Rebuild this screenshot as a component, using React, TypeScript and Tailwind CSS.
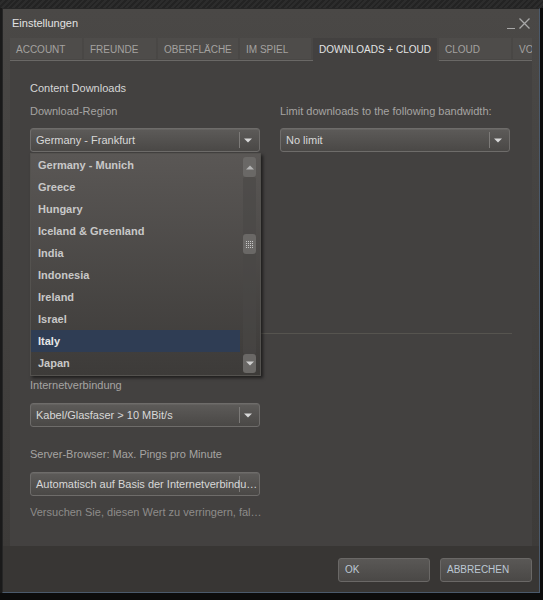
import React from 'react';

const tabs = [
  { label: 'ACCOUNT', w: 'w-[74px]' },
  { label: 'FREUNDE', w: 'w-[74px]' },
  { label: 'OBERFLÄCHE', w: 'w-[82px]' },
  { label: 'IM SPIEL', w: 'w-[73px]' },
  { label: 'DOWNLOADS + CLOUD', w: 'w-[126px]', active: true },
  { label: 'CLOUD', w: 'w-[74px]' },
  { label: 'VOICE', w: 'w-[60px]' },
];

const regions = [
  'Germany - Munich',
  'Greece',
  'Hungary',
  'Iceland & Greenland',
  'India',
  'Indonesia',
  'Ireland',
  'Israel',
  'Italy',
  'Japan',
];

function Arrow({ up = false, color = '#d8d8d8' }: { up?: boolean; color?: string }) {
  return (
    <svg width="8" height="5" viewBox="0 0 8 5" className="block">
      <path d={up ? 'M0 4.5h8L4 0.5z' : 'M0 0.5h8L4 4.5z'} fill={color} />
    </svg>
  );
}

function Select({ text, noArrow = false }: { text: string; noArrow?: boolean }) {
  return (
    <div className="relative h-[24px] w-[230px] rounded-[3px] border border-[#6e6c6a] bg-gradient-to-b from-[#5d5b59] to-[#4a4846] shadow-[inset_0_1px_0_rgba(255,255,255,0.05)]">
      <div className="absolute right-[19px] top-[3px] h-[16px] w-px bg-[#7c7a78]" />
      {!noArrow && (
        <div className="absolute right-[7px] top-[9px]">
          <Arrow />
        </div>
      )}
      <div className="absolute inset-0 truncate pl-[5px] pr-0 text-[11px] leading-[22px] text-[#d8d8d8]">
        {text}
      </div>
    </div>
  );
}

function Grip() {
  return (
    <svg width="7" height="7" viewBox="0 0 7 7" className="block">
      {[0, 2, 4, 6].map((y) =>
        [0, 2, 4, 6].map((x) => <rect key={`${x}-${y}`} x={x} y={y} width="1" height="1" fill="#c8c8c8" />)
      )}
    </svg>
  );
}

function RegionList() {
  return (
    <div className="absolute left-0 top-[25px] z-10 flex h-[223px] w-[231px] border border-[#54524f] bg-gradient-to-b from-[#5a5755] to-[#3d3b39] shadow-[2px_2px_3px_rgba(0,0,0,0.55)]">
      <div className="w-[209px]">
        {regions.map((r) => (
          <div
            key={r}
            className={`h-[22px] pl-[7px] text-[11px] font-bold leading-[22px] ${
              r === 'Italy' ? 'bg-[#2f3d54] text-[#e6e6e6]' : 'text-[#c8c8c8]'
            }`}
          >
            {r}
          </div>
        ))}
      </div>
      <div className="ml-[3px] flex w-[13px] flex-col pt-[3px] pb-[2px]">
        <div className="flex h-[20px] items-center justify-center rounded-[3px] bg-[#6a6866]">
          <Arrow up color="#b4b4b4" />
        </div>
        <div className="flex flex-1 flex-col rounded-[2px] bg-[#4a4846]/60 pt-[57px]">
          <div className="flex h-[20px] items-center justify-center rounded-[3px] bg-[#6a6866]">
            <Grip />
          </div>
        </div>
        <div className="flex h-[19px] items-center justify-center rounded-[3px] bg-[#6a6866]">
          <Arrow color="#d0d0d0" />
        </div>
      </div>
    </div>
  );
}

export default function App() {
  return (
    <div className="h-[600px] w-[543px] overflow-hidden bg-[#0c0c0c] font-['Liberation_Sans',Arial,sans-serif]">
      <div className="h-[8px] bg-[repeating-linear-gradient(135deg,#232323_0px,#232323_2px,#2c2c2c_2px,#2c2c2c_4px)]" />
      <div className="flex">
        <div className="h-[585px] w-[2px] bg-[#1a1a1a]" />
        <div className="flex h-[585px] w-[538px] flex-col border border-[#262626] border-r-[#4b5a6c] border-b-[#4b5a6c] bg-gradient-to-b from-[#4a4846] to-[#3c3a38]">
          {/* title bar */}
          <div className="flex h-[29px] items-center justify-between pl-[9px] pr-[9px]">
            <span className="text-[11px] text-[#e2e2e2]">Einstellungen</span>
            <div className="flex items-center gap-[4px]">
              <div className="mt-[9px] h-px w-[8px] bg-[#a8a8a8]" />
              <svg width="11" height="11" viewBox="0 0 11 11">
                <path d="M0.5 0.5L10.5 10.5M10.5 0.5L0.5 10.5" stroke="#a8a8a8" strokeWidth="1.3" />
              </svg>
            </div>
          </div>

          {/* tabs */}
          <div className="mx-[7px] flex h-[23px] overflow-hidden">
            {tabs.map((t) => (
              <div
                key={t.label}
                className={`${t.w} shrink-0 pr-[2px] ${t.active ? '' : 'border-b border-[#6a6866]'}`}
              >
                <div
                  className={`overflow-hidden whitespace-nowrap pl-[6px] pt-[1px] text-[10px] leading-[21px] ${
                    t.active ? 'h-[23px] bg-[#434140] text-[#e4e4e4]' : 'h-[21px] bg-[#4e4c4a] text-[#a4a2a0]'
                  }`}
                >
                  {t.label}
                </div>
              </div>
            ))}
          </div>

          {/* content panel */}
          <div className="mx-[7px] flex-1 bg-[#434140] px-[20px] pt-[20px]">
            <div className="text-[11px] leading-[14px] text-[#d6d6d6]">Content Downloads</div>
            <div className="mt-[9px] flex gap-[20px]">
              <div className="w-[230px]">
                <div className="text-[11px] leading-[14px] text-[#a6a4a2]">Download-Region</div>
                <div className="relative mt-[10px]">
                  <Select text="Germany - Frankfurt" />
                  <RegionList />
                </div>
              </div>
              <div className="w-[230px]">
                <div className="text-[11px] leading-[14px] text-[#a6a4a2]">
                  Limit downloads to the following bandwidth:
                </div>
                <div className="mt-[10px]">
                  <Select text="No limit" />
                </div>
              </div>
            </div>

            <div className="mt-[181px] h-px bg-[#56544f]" />

            <div className="mt-[27px] w-[230px] text-[11px] leading-[16px] text-[#a6a4a2]">
              <div>Ungefähre Geschwindigkeit Ihrer</div>
              <div>Internetverbindung</div>
            </div>
            <div className="mt-[10px]">
              <Select text="Kabel/Glasfaser > 10 MBit/s" />
            </div>
            <div className="mt-[20px] text-[11px] leading-[14px] text-[#a6a4a2]">
              Server-Browser: Max. Pings pro Minute
            </div>
            <div className="mt-[11px]">
              <Select text="Automatisch auf Basis der Internetverbindung (empfohlen)" noArrow />
            </div>
            <div className="mt-[9px] w-[232px] truncate text-[11px] leading-[14px] text-[#8e8c8a]">
              Versuchen Sie, diesen Wert zu verringern, falls Verbindungsprobleme auftreten.
            </div>
          </div>

          {/* footer */}
          <div className="flex h-[46px] shrink-0 items-center justify-end gap-[10px] bg-[#383634] pr-[7px] pt-[2px]">
            {['OK', 'ABBRECHEN'].map((b) => (
              <div
                key={b}
                className="h-[24px] w-[92px] rounded-[3px] border border-[#6a6866] bg-gradient-to-b from-[#5a5856] to-[#4a4846] pl-[6px] text-[10px] leading-[22px] text-[#bcc8d4]"
              >
                {b}
              </div>
            ))}
          </div>
        </div>
      </div>
    </div>
  );
}
